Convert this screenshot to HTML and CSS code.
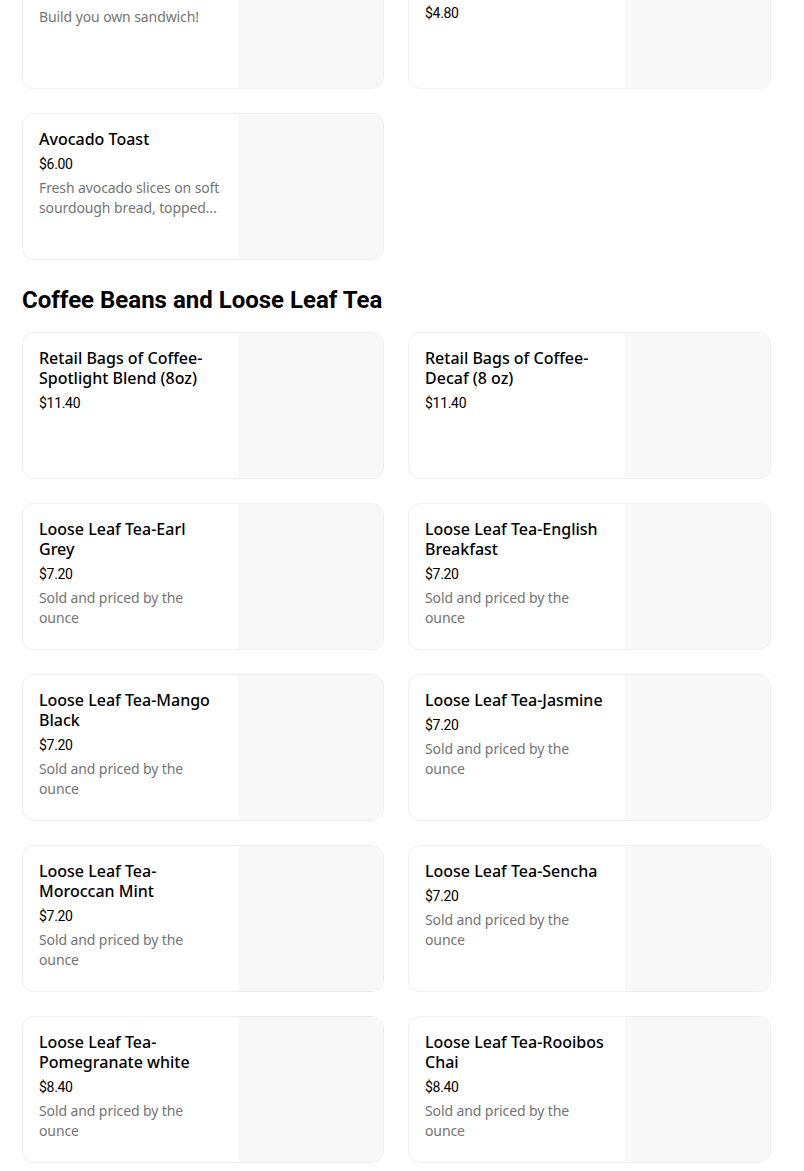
FILE: index.html
```html
<!DOCTYPE html>
<html lang="en">
<head>
<meta charset="utf-8">
<title>Menu</title>
<link rel="stylesheet" href="styles.css">
</head>
<body>
<main class="menu">
  <section class="section section-first">
    <div class="grid">
      <div class="card">
        <div class="info">
          <div class="title">Sandwich</div>
          <div class="price">$9.00</div>
          <div class="desc">Build you own sandwich!</div>
        </div>
        <div class="thumb"></div>
      </div>
      <div class="card">
        <div class="info">
          <div class="title">Breakfast Burrito with Egg</div>
          <div class="price">$4.80</div>
        </div>
        <div class="thumb"></div>
      </div>
      <div class="card">
        <div class="info">
          <div class="title">Avocado Toast</div>
          <div class="price">$6.00</div>
          <div class="desc">Fresh avocado slices on soft sourdough bread, topped…</div>
        </div>
        <div class="thumb"></div>
      </div>
    </div>
  </section>

  <section class="section">
    <h2 class="heading">Coffee Beans and Loose Leaf Tea</h2>
    <div class="grid">
      <div class="card">
        <div class="info">
          <div class="title">Retail Bags of Coffee-Spotlight Blend (8oz)</div>
          <div class="price">$11.40</div>
        </div>
        <div class="thumb"></div>
      </div>
      <div class="card">
        <div class="info">
          <div class="title">Retail Bags of Coffee-Decaf (8 oz)</div>
          <div class="price">$11.40</div>
        </div>
        <div class="thumb"></div>
      </div>
      <div class="card">
        <div class="info">
          <div class="title">Loose Leaf Tea-Earl Grey</div>
          <div class="price">$7.20</div>
          <div class="desc">Sold and priced by the ounce</div>
        </div>
        <div class="thumb"></div>
      </div>
      <div class="card">
        <div class="info">
          <div class="title">Loose Leaf Tea-English Breakfast</div>
          <div class="price">$7.20</div>
          <div class="desc">Sold and priced by the ounce</div>
        </div>
        <div class="thumb"></div>
      </div>
      <div class="card">
        <div class="info">
          <div class="title">Loose Leaf Tea-Mango Black</div>
          <div class="price">$7.20</div>
          <div class="desc">Sold and priced by the ounce</div>
        </div>
        <div class="thumb"></div>
      </div>
      <div class="card">
        <div class="info">
          <div class="title">Loose Leaf Tea-Jasmine</div>
          <div class="price">$7.20</div>
          <div class="desc">Sold and priced by the ounce</div>
        </div>
        <div class="thumb"></div>
      </div>
      <div class="card">
        <div class="info">
          <div class="title">Loose Leaf Tea-Moroccan Mint</div>
          <div class="price">$7.20</div>
          <div class="desc">Sold and priced by the ounce</div>
        </div>
        <div class="thumb"></div>
      </div>
      <div class="card">
        <div class="info">
          <div class="title">Loose Leaf Tea-Sencha</div>
          <div class="price">$7.20</div>
          <div class="desc">Sold and priced by the ounce</div>
        </div>
        <div class="thumb"></div>
      </div>
      <div class="card">
        <div class="info">
          <div class="title">Loose Leaf Tea-Pomegranate white</div>
          <div class="price">$8.40</div>
          <div class="desc">Sold and priced by the ounce</div>
        </div>
        <div class="thumb"></div>
      </div>
      <div class="card">
        <div class="info">
          <div class="title">Loose Leaf Tea-Rooibos Chai</div>
          <div class="price">$8.40</div>
          <div class="desc">Sold and priced by the ounce</div>
        </div>
        <div class="thumb"></div>
      </div>
    </div>
  </section>
</main>
</body>
</html>
```

FILE: styles.css
```css
* {
  box-sizing: border-box;
}

html, body {
  margin: 0;
  padding: 0;
  background: #ffffff;
}

body {
  font-family: "Noto Sans", Roboto, "Liberation Sans", Arial, sans-serif;
  color: #000000;
  overflow: hidden;
}

.menu {
  width: 750px;
  margin-left: 22px;
}

.section-first {
  margin-top: -58px;
}

.heading {
  margin: 24px 0 16px;
  font-family: Roboto, "Liberation Sans", Arial, sans-serif;
  font-size: 24px;
  line-height: 32px;
  font-weight: 700;
  letter-spacing: 0;
}

.grid {
  display: grid;
  grid-template-columns: 362px 363px;
  column-gap: 24px;
  row-gap: 24px;
}

.card {
  display: flex;
  height: 147px;
  border: 1px solid #efefef;
  border-radius: 12px;
  overflow: hidden;
  background: #ffffff;
}

.info {
  flex: 1;
  min-width: 0;
  padding: 15px 16px 0 16px;
}

.thumb {
  flex: 0 0 145px;
  width: 145px;
  background: #f8f8f8;
}

.title {
  font-family: "Noto Sans", Roboto, sans-serif;
  font-size: 16px;
  line-height: 20px;
  font-weight: 500;
  color: #000000;
}

.price {
  margin-top: 5px;
  font-family: Roboto, "Noto Sans", sans-serif;
  font-size: 14px;
  line-height: 20px;
  letter-spacing: -0.3px;
  color: #000000;
}

.desc {
  margin-top: 4px;
  font-family: "Noto Sans", Roboto, sans-serif;
  font-size: 14px;
  line-height: 20px;
  color: #757575;
  letter-spacing: -0.1px;
}
```
